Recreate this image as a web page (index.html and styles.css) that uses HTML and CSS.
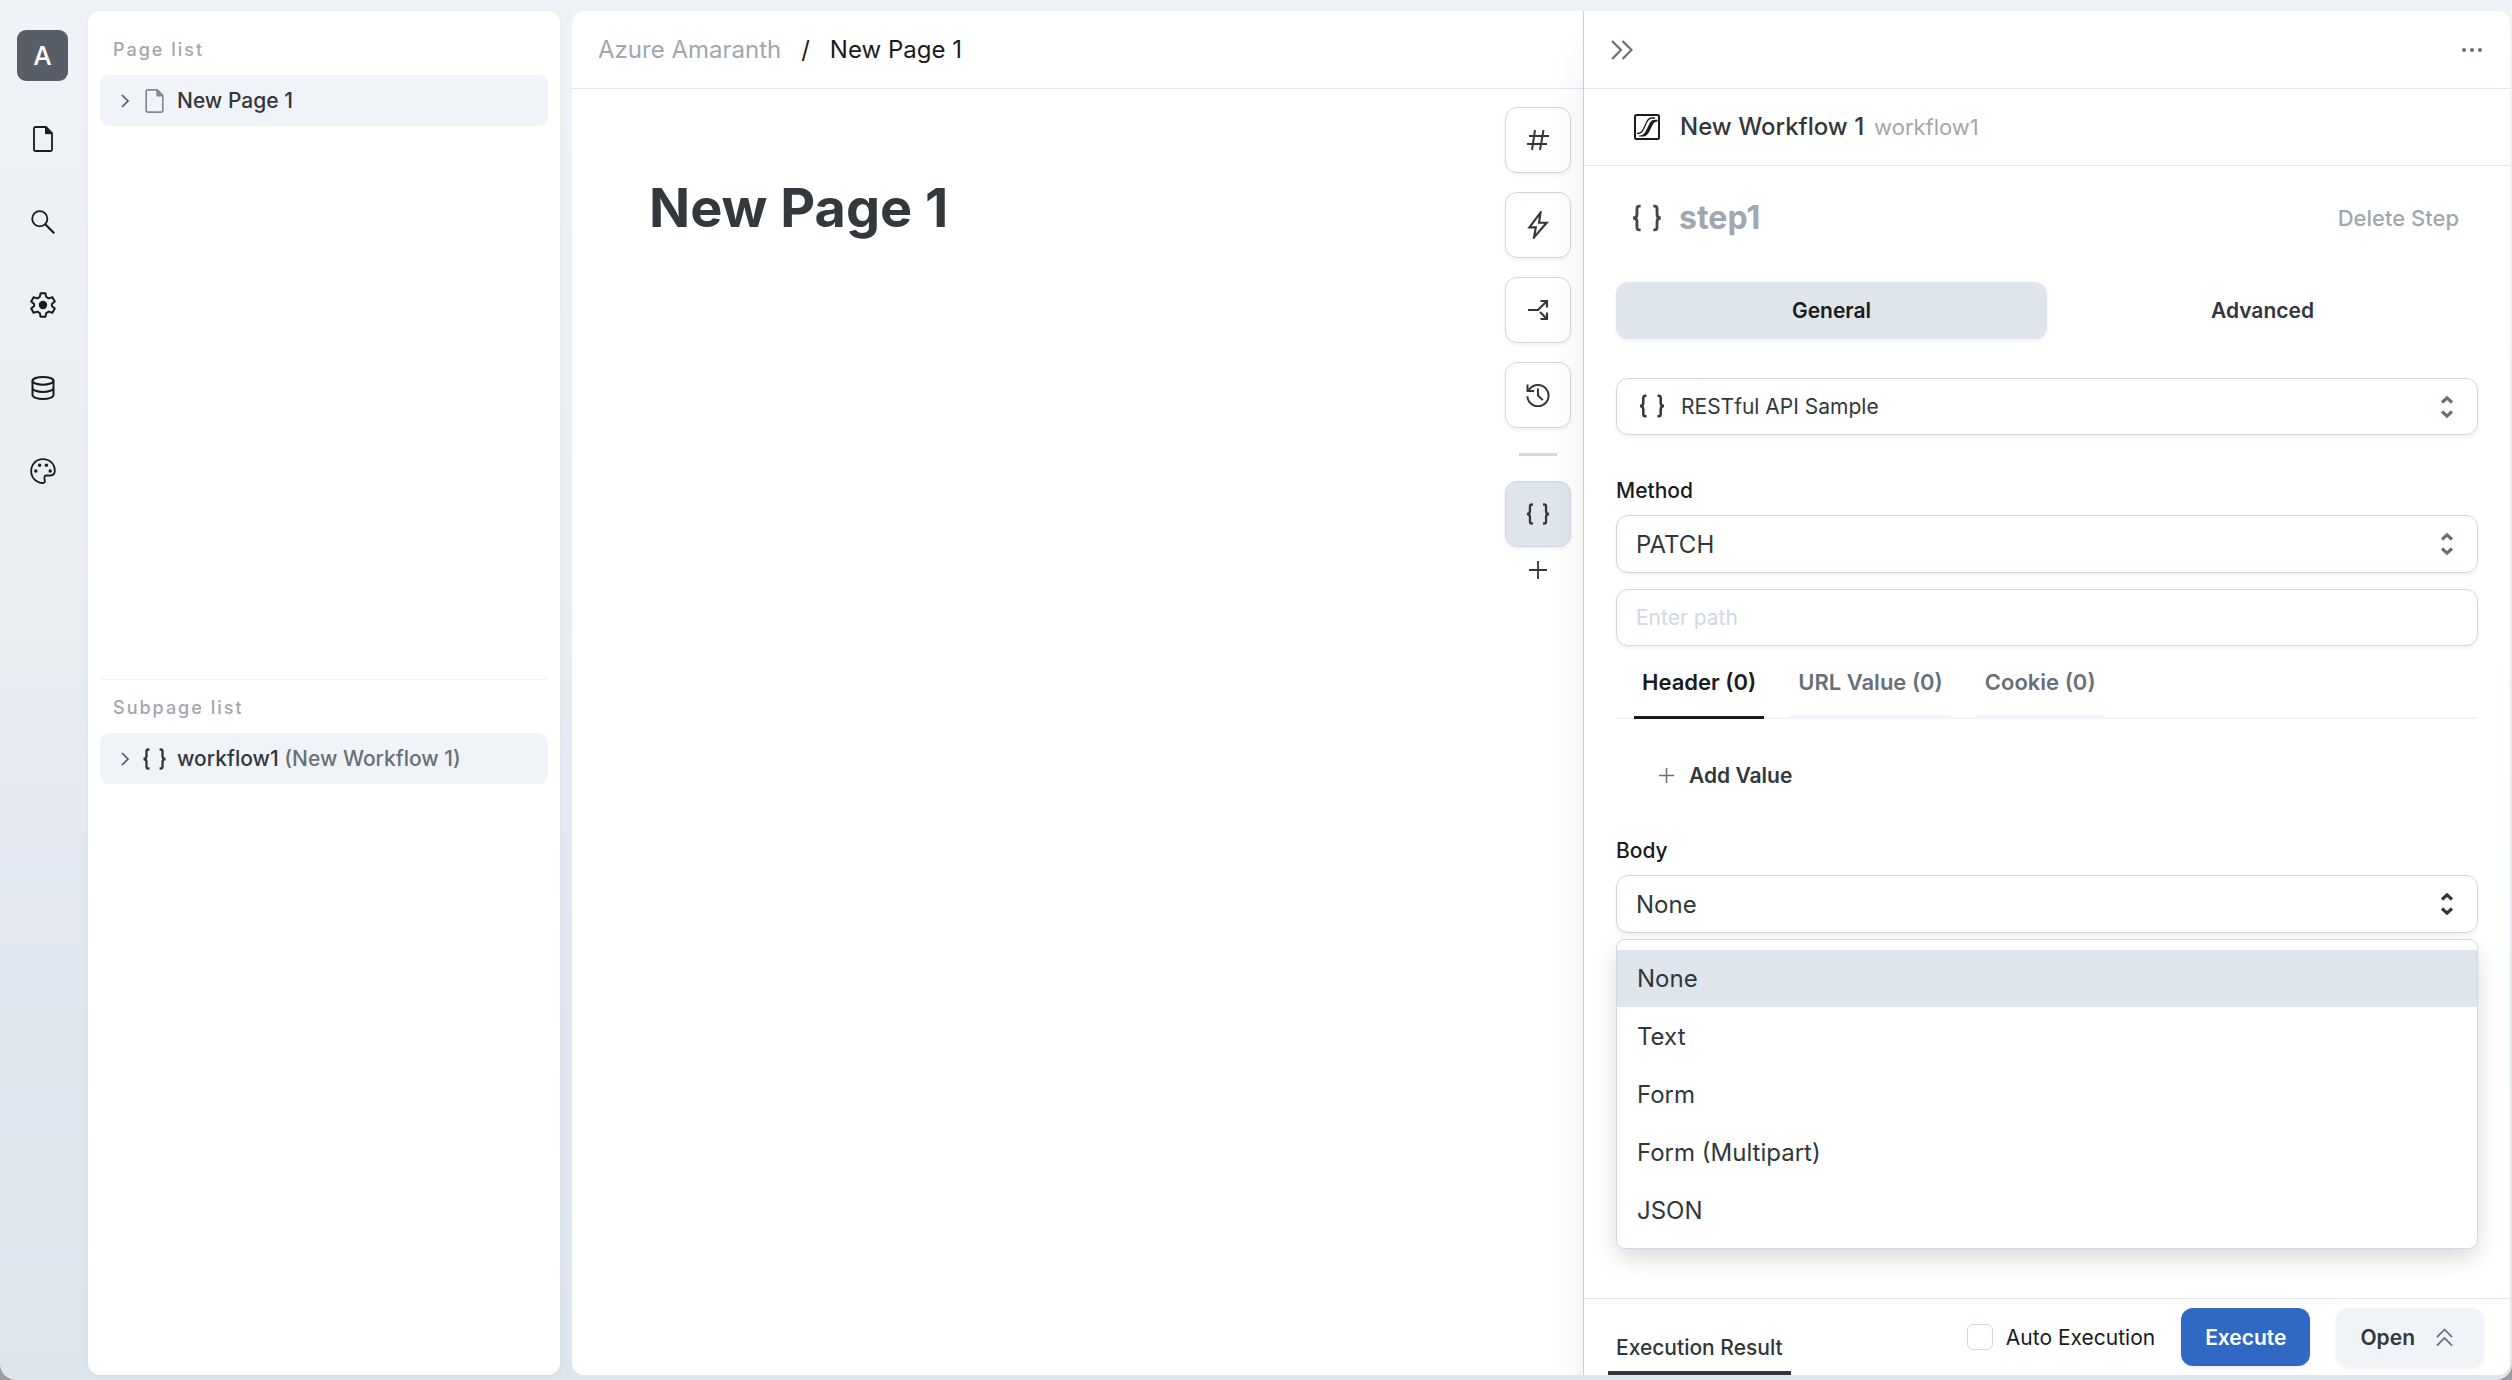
FILE: index.html
```html
<!DOCTYPE html>
<html lang="en">
<head>
<meta charset="utf-8">
<title>New Page 1</title>
<meta name="viewport" content="width=device-width, initial-scale=1">
<link rel="stylesheet" href="styles.css">
</head>
<body>
<svg class="sprite" aria-hidden="true">
  <symbol id="file" viewBox="1 0 26 26"><path d="M6.500 1H17l6 6v16.500a1.500 1.500 0 0 1-1.500 1.500h-15A1.500 1.500 0 0 1 5 23.500v-21A1.500 1.500 0 0 1 6.500 1z" fill="none" stroke="currentColor" stroke-width="1.800"/><path d="M16.500 1v6.700H23z" fill="currentColor" stroke="currentColor" stroke-width="1"/></symbol>
  <symbol id="braces" viewBox="0 0 26 26"><path d="M7.500 2.700H6.300Q4.300 2.700 4.300 5V9.700Q4.300 13 1 13 4.300 13 4.300 16.300V21Q4.300 23.300 6.300 23.300H7.500M18.500 2.700h1.200Q21.700 2.700 21.700 5V9.700q0 3.300 3.300 3.300-3.300 0-3.300 3.300V21q0 2.300-2 2.300H18.500" fill="none" stroke="currentColor" stroke-width="2.500"/></symbol>
  <symbol id="chevron" viewBox="0 0 8 14"><path d="M1 1l6 6-6 6" fill="none" stroke="currentColor" stroke-width="1.700"/></symbol>
  <symbol id="plus" viewBox="0 0 18 18"><path d="M9 0v18M0 9h18" fill="none" stroke="currentColor" stroke-width="1.800"/></symbol>
  <symbol id="updown" viewBox="0 0 14 26"><path d="M2 8.500l5-4.600 5 4.600M2 17.500l5 4.600 5-4.600" fill="none" stroke="currentColor" stroke-width="3.200"/></symbol>
</svg>
<div class="app">
  <nav class="rail" aria-label="Workspace">
    <button class="avatar" type="button">A</button>
    <button class="rail-button" type="button" aria-label="Pages"><svg class="icon"><use href="#file"/></svg></button>
    <button class="rail-button" type="button" aria-label="Search"><svg class="icon" viewBox="0 0 26 26" fill="none" stroke="currentColor" stroke-width="1.800"><circle cx="9.800" cy="9.800" r="7.600"/><path d="M15.200 15.200l9 9" stroke-width="2.200"/></svg></button>
    <button class="rail-button" type="button" aria-label="Settings"><svg class="icon" viewBox="0 0 26 26" fill="none" stroke="currentColor" stroke-width="2" stroke-linejoin="round"><path d="M10.600 1.200h4.800l.8 3.700 2.500 1.500 3.700-1.200 2.400 4.200-2.900 2.600v2l2.900 2.600-2.400 4.200-3.700-1.200-2.500 1.500-.8 3.700h-4.800l-.8-3.700-2.500-1.500-3.700 1.200-2.400-4.200 2.900-2.600v-2L1.200 9.400l2.400-4.200 3.700 1.200 2.500-1.500z"/><circle cx="13" cy="13" r="3.200" fill="currentColor"/></svg></button>
    <button class="rail-button" type="button" aria-label="Data"><svg class="icon" viewBox="0 0 26 26" fill="none" stroke="currentColor" stroke-width="2"><ellipse cx="13" cy="5.800" rx="10.500" ry="3.900"/><path d="M2.500 5.800v14.200c0 2.200 4.700 4 10.500 4s10.500-1.800 10.500-4V5.800M2.500 13c0 2.200 4.700 3.900 10.500 3.900s10.500-1.700 10.500-3.900"/></svg></button>
    <button class="rail-button" type="button" aria-label="Theme"><svg class="icon" viewBox="0 0 26 26" fill="none" stroke="currentColor" stroke-width="1.800"><path d="M13 1.200C6 1.200 1.200 6.400 1.200 13.200S6.400 25 13 25c1.600 0 2.200-1 1.800-2.500-.7-2.600-.6-5 1.500-5h4c2.700 0 4.500-1.700 4.500-4.700C24.800 6 19.800 1.200 13 1.200z"/><g fill="currentColor" stroke="none"><circle cx="9.600" cy="7.300" r="1.700"/><circle cx="16.400" cy="7.300" r="1.700"/><circle cx="5.800" cy="13" r="1.700"/><circle cx="20.200" cy="13" r="1.700"/></g></svg></button>
  </nav>

  <aside class="lists">
    <section class="list">
      <h2 class="list-title">Page list</h2>
      <button class="list-row" type="button"><svg class="list-chevron"><use href="#chevron"/></svg><svg class="list-icon list-icon-soft"><use href="#file"/></svg><span>New Page 1</span></button>
    </section>
    <section class="list list-sub">
      <h2 class="list-title">Subpage list</h2>
      <button class="list-row" type="button"><svg class="list-chevron"><use href="#chevron"/></svg><svg class="list-icon"><use href="#braces"/></svg><span>workflow1 <span class="list-note">(New Workflow 1)</span></span></button>
    </section>
  </aside>

  <div class="workspace">
    <main class="page">
      <header class="bar crumbs"><a class="crumb-parent" href="#">Azure Amaranth</a><span>/</span><span>New Page 1</span></header>
      <div class="page-body">
        <h1 class="page-title">New Page 1</h1>
        <div class="tools">
          <button class="tool" type="button" aria-label="State"><svg class="tool-icon" viewBox="0 0 24 24" fill="none" stroke="currentColor" stroke-width="2"><path d="M9 2L6 22M17.500 2l-3.500 20M3 8h20M1 16h20"/></svg></button>
          <button class="tool" type="button" aria-label="Trigger"><svg class="tool-icon tool-icon-tall" viewBox="0 0 22 26" fill="none" stroke="currentColor" stroke-width="2"><path d="M13.300 1.500L3 15.200h6L7.300 24.500 19 10.900h-7z"/></svg></button>
          <button class="tool" type="button" aria-label="Flow"><svg class="tool-icon" viewBox="0 0 24 24" fill="none" stroke="currentColor" stroke-width="2.200"><path d="M2 12h10l9-9M14.500 3H21v6.500M14 14l7 7M14.500 21H21v-6.500"/></svg></button>
          <button class="tool" type="button" aria-label="History"><svg class="tool-icon" viewBox="0 0 24 24" fill="none" stroke="currentColor" stroke-width="2"><path d="M2.800 7.300A10.600 10.600 0 1 1 1.400 13.200M1.500 1.500V8h6.700M12 5.500v7l4.800 4.600"/></svg></button>
          <hr class="tool-rule">
          <button class="tool tool-active" type="button" aria-label="step1"><svg class="tool-icon"><use href="#braces"/></svg></button>
          <button class="tool-add" type="button" aria-label="Add step"><svg><use href="#plus"/></svg></button>
        </div>
      </div>
    </main>

    <aside class="panel">
      <header class="bar panel-bar">
        <button class="plain" type="button" aria-label="Collapse"><svg class="collapse-icon" viewBox="0 0 22 20" fill="none" stroke="currentColor" stroke-width="2.200"><path d="M1 1l9 9-9 9M11.500 1l9 9-9 9"/></svg></button>
        <button class="plain" type="button" aria-label="More"><svg class="more-icon" viewBox="0 0 20 4" fill="currentColor"><circle cx="2" cy="2" r="2"/><circle cx="10" cy="2" r="2"/><circle cx="18" cy="2" r="2"/></svg></button>
      </header>
      <div class="workflow">
        <svg class="workflow-icon" viewBox="0 0 26 26"><rect x="1" y="1" width="24" height="24" rx="1.500" fill="none" stroke="currentColor" stroke-width="2"/><path d="M3 19.500c4 0 5.200-1.500 7-5.500l2.500-5.500C14 5 15.500 4 18 4h3" fill="none" stroke="currentColor" stroke-width="1.300"/><path d="M5 21.500c3.500 0 5.500-1.500 7.500-6l3-6C17 6.700 18.500 5.700 21.500 5.700h2v1.800c-3 0-4 1.500-5.500 4.500l-2.700 5.500C13.500 21 12 22.500 8.500 22.500H5z" fill="currentColor"/></svg>
        <h2 class="workflow-name">New Workflow 1</h2><span class="workflow-id">workflow1</span>
      </div>

      <div class="panel-body">
        <div class="step">
          <svg class="step-icon"><use href="#braces"/></svg>
          <h3 class="step-name">step1</h3>
          <button class="plain step-delete" type="button">Delete Step</button>
        </div>
        <div class="segments">
          <button class="segment segment-on" type="button">General</button>
          <button class="segment" type="button">Advanced</button>
        </div>
        <div class="field field-source">
          <svg class="field-icon"><use href="#braces"/></svg>
          <select class="control control-source" aria-label="Data source"><option>RESTful API Sample</option></select>
          <svg class="field-arrows"><use href="#updown"/></svg>
        </div>
        <label class="label" for="method">Method</label>
        <div class="field">
          <select class="control" id="method"><option>PATCH</option></select>
          <svg class="field-arrows"><use href="#updown"/></svg>
        </div>
        <input class="control control-path" type="text" placeholder="Enter path" aria-label="Path">
        <div class="tabs">
          <button class="tab tab-on" type="button">Header (0)</button>
          <button class="tab" type="button">URL Value (0)</button>
          <button class="tab" type="button">Cookie (0)</button>
        </div>
        <button class="plain add-value" type="button"><svg><use href="#plus"/></svg>Add Value</button>
        <label class="label" for="body">Body</label>
        <div class="field field-open">
          <select class="control" id="body"><option>None</option></select>
          <svg class="field-arrows"><use href="#updown"/></svg>
          <ul class="menu" role="listbox" aria-label="Body">
            <li class="option option-on" role="option" aria-selected="true">None</li>
            <li class="option" role="option">Text</li>
            <li class="option" role="option">Form</li>
            <li class="option" role="option">Form (Multipart)</li>
            <li class="option" role="option">JSON</li>
          </ul>
        </div>
      </div>

      <footer class="panel-foot">
        <button class="result-tab" type="button">Execution Result</button>
        <label class="auto"><input class="check" type="checkbox">Auto Execution</label>
        <button class="action action-run" type="button">Execute</button>
        <button class="action action-open" type="button">Open<svg viewBox="0 0 18 20" fill="none" stroke="currentColor" stroke-width="1.900"><path d="M1 9.500l8-8 8 8M1 18.500l8-8 8 8"/></svg></button>
      </footer>
    </aside>
  </div>
</div>
</body>
</html>
```
FILE: styles.css
```css
* { box-sizing: border-box; }

:root {
  --ink: #1a1b1e;
  --text: #32373c;
  --muted: #687078;
  --faint: #a1a7ae;
  --line: #dfe5eb;
  --edge: #cfd8e3;
  --soft: #f0f3f8;
  --fill: #dfe5ec;
  --shadow: 0 2px 4px rgba(0, 0, 0, 0.06);
}

body {
  margin: 0;
  background: #9a9da0;
  color: var(--ink);
  font-family: Inter, "Liberation Sans", sans-serif;
  font-size: 22px;
}

h1, h2, h3, ul { margin: 0; padding: 0; }
button, input, select { font: inherit; color: inherit; }
button { border: 0; padding: 0; background: none; cursor: pointer; }
svg { display: block; flex: none; }
.sprite { display: none; }

.app {
  display: flex;
  height: 100vh;
  padding: 11px 2px 5px 0;
  background: linear-gradient(#eff3f8, #e8edf1 47%, #e4e9f2 54%, #dde5ed);
  border-radius: 0 0 16px 16px;
}

/* Left rail */
.rail {
  display: flex;
  flex: none;
  flex-direction: column;
  align-items: center;
  width: 88px;
  padding: 19px 3px 0 0;
}
.avatar {
  width: 51px;
  height: 51px;
  margin-bottom: 16px;
  border-radius: 9px;
  background: #575e67;
  color: #fff;
  font-size: 26px;
  font-weight: 500;
}
.rail-button {
  display: grid;
  place-items: center;
  width: 51px;
  height: 83px;
}
.icon { width: 26px; height: 26px; }

/* Page lists */
.lists {
  display: flex;
  flex: none;
  flex-direction: column;
  width: 472px;
  padding: 0 12px;
  border-radius: 12px;
  background: #fff;
  box-shadow: 0 2px 6px rgba(0, 0, 0, 0.04);
}
.list {
  flex: 0 0 49%;
  padding-top: 21px;
}
.list-sub {
  flex: 1;
  padding-top: 10px;
  border-top: 1px solid var(--soft);
}
.list-title {
  padding: 0 13px;
  margin-bottom: 7px;
  color: var(--faint);
  font-size: 18px;
  font-weight: 500;
  line-height: 36px;
  letter-spacing: 2px;
}
.list-row {
  display: flex;
  align-items: center;
  width: 100%;
  height: 51px;
  padding: 0 21px;
  border-radius: 9px;
  background: var(--soft);
  color: var(--text);
  font-size: 21px;
  font-weight: 500;
}
.list-chevron { width: 8px; height: 14px; margin-right: 13px; color: #555b63; }
.list-icon { width: 25px; height: 24px; margin-right: 10px; }
.list-icon-soft { color: #83888f; }
.list-note { color: var(--muted); }

/* Workspace */
.workspace {
  display: flex;
  flex: 1;
  min-width: 0;
  margin-left: 12px;
  border-radius: 12px;
  background: #fff;
  overflow: hidden;
}
.page { flex: 1; min-width: 0; }
.bar {
  display: flex;
  align-items: center;
  height: 78px;
  border-bottom: 1px solid var(--line);
}
.crumbs { gap: 20px; padding: 0 26px; font-size: 24px; }
.crumb-parent { color: var(--faint); text-decoration: none; }
.page-body {
  display: flex;
  justify-content: space-between;
  padding: 18px 12px 0 77px;
}
.page-title {
  padding-top: 65px;
  color: #33383d;
  font-size: 54px;
  font-weight: 700;
  line-height: 72px;
}
.tools {
  display: flex;
  flex-direction: column;
  align-items: center;
  gap: 19px;
}
.tool {
  display: grid;
  place-items: center;
  width: 66px;
  height: 66px;
  border: 1px solid var(--edge);
  border-radius: 12px;
  background: #fff;
  color: var(--text);
  box-shadow: var(--shadow);
}
.tool-icon { width: 24px; height: 24px; }
.tool-icon-tall { height: 28px; }
.tool-rule {
  width: 38px;
  height: 3px;
  margin: 6px 0;
  border: 0;
  background: var(--edge);
}
.tool-active { background: var(--fill); }
.tool-add { padding: 0 12px; color: var(--text); margin-top: -5px; }
.tool-add svg { width: 18px; height: 18px; }

/* Step panel */
.panel {
  display: flex;
  flex: none;
  flex-direction: column;
  width: 927px;
  max-width: 60%;
  border-left: 1px solid #cbced3;
  background: #fff;
  box-shadow: 0 40px 36px rgba(0, 0, 0, 0.07);
}
.plain { color: var(--muted); }
.panel-bar { justify-content: space-between; padding: 0 28px 0 27px; }
.collapse-icon { width: 22px; height: 20px; }
.more-icon { width: 20px; height: 4px; }
.workflow {
  display: flex;
  align-items: center;
  height: 77px;
  padding: 0 50px;
  border-bottom: 1px solid var(--line);
}
.workflow-icon { width: 26px; height: 26px; margin-right: 20px; }
.workflow-name { color: var(--text); font-size: 24px; font-weight: 500; line-height: 32px; }
.workflow-id { margin-left: 10px; color: var(--faint); font-size: 22px; line-height: 32px; }

.panel-body { flex: 1; padding: 32px 32px 0; }
.step { display: flex; align-items: center; height: 40px; padding: 0 19px 0 16px; }
.step-icon { width: 30px; height: 30px; margin-right: 17px; color: #44484d; }
.step-name { color: var(--faint); font-size: 32px; font-weight: 700; line-height: 40px; }
.step-delete { margin-left: auto; color: var(--faint); font-weight: 500; font-size: 22px; }

.segments { display: flex; margin-top: 44px; }
.segment {
  flex: 1;
  height: 57px;
  border-radius: 12px;
  color: var(--text);
  font-size: 21px;
  font-weight: 600;
}
.segment-on { background: var(--fill); color: var(--ink); box-shadow: var(--shadow); }

.field { position: relative; }
.field-source { margin: 39px 0 40px; color: var(--text); }
.field-icon { position: absolute; top: 15px; left: 23px; width: 26px; height: 26px; }
.field-arrows { position: absolute; top: 16px; right: 24px; width: 14px; height: 26px; color: var(--muted); }
.field-open .field-arrows { color: var(--text); }
.control {
  display: block;
  width: 100%;
  height: 58px;
  padding: 0 19px;
  border: 1px solid var(--edge);
  border-radius: 12px;
  background: #fff;
  color: var(--text);
  font-size: 24px;
  appearance: none;
  box-shadow: var(--shadow);
}
.control-source { height: 57px; padding-left: 64px; font-size: 21px; }
.control-path { height: 57px; margin-top: 16px; font-size: 21px; }
.control-path::placeholder { color: var(--edge); opacity: 1; }
.label { display: block; font-size: 21px; font-weight: 500; line-height: 32px; margin-bottom: 8px; }

.tabs {
  display: flex;
  gap: 26px;
  margin-top: 16px;
  padding: 0 18px;
  box-shadow: inset 0 -2px var(--soft);
}
.tab {
  height: 55px;
  padding: 0 8px 14px;
  border-bottom: 2px solid var(--soft);
  color: var(--muted);
  font-size: 22px;
  font-weight: 600;
}
.tab-on { height: 57px; padding-bottom: 15px; border-bottom: 3px solid var(--ink); color: var(--ink); }
.add-value {
  display: flex;
  align-items: center;
  gap: 15px;
  height: 58px;
  margin: 27px 0 31px 43px;
  color: var(--text);
  font-size: 21px;
  font-weight: 600;
}
.add-value svg { width: 15px; height: 15px; color: var(--muted); }

.menu {
  position: absolute;
  top: 64px;
  right: 0;
  left: 0;
  padding: 10px 0 9px;
  border: 1px solid var(--edge);
  border-radius: 9px;
  background: #fff;
  color: var(--text);
  font-size: 24px;
  list-style: none;
  box-shadow: 0 10px 26px -2px rgba(0, 0, 0, 0.16);
}
.option { padding: 0 20px; line-height: 57px; }
.option + .option { margin-top: 1px; }
.option-on { background: var(--fill); }

.panel-foot {
  display: flex;
  align-items: center;
  height: 77px;
  padding: 0 26px 0 24px;
  border-top: 1px solid var(--line);
}
.result-tab {
  align-self: stretch;
  margin-right: auto;
  padding: 24px 8px 0;
  border-bottom: 4px solid var(--text);
  color: var(--text);
  font-size: 21px;
  font-weight: 500;
}
.auto { display: flex; align-items: center; gap: 13px; margin-right: 26px; font-size: 21px; }
.check {
  width: 26px;
  height: 26px;
  margin: 0;
  border: 1px solid var(--edge);
  border-radius: 6px;
  background: #fff;
  appearance: none;
}
.action {
  display: flex;
  align-items: center;
  height: 58px;
  padding: 0 24px;
  border-radius: 12px;
  font-size: 21px;
  font-weight: 600;
  box-shadow: var(--shadow);
}
.action-run { background: #2f69c3; color: #fff; margin-right: 26px; }
.action-open { gap: 21px; padding-right: 31px; background: var(--soft); color: var(--text); }
.action-open svg { width: 17px; height: 19px; color: var(--muted); }
```
